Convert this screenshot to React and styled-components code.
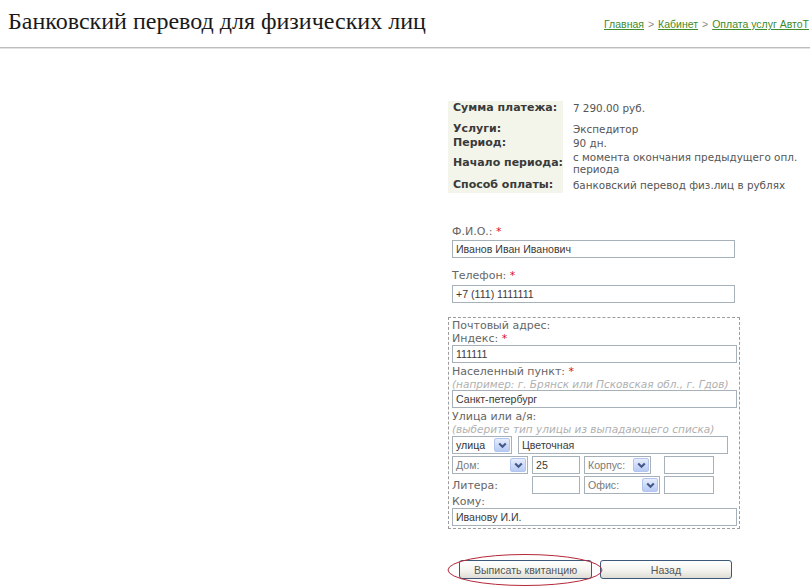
import React from 'react';
import styled, { createGlobalStyle } from 'styled-components';

const GlobalStyle = createGlobalStyle`
  html, body {
    margin: 0;
    padding: 0;
    background: #ffffff;
  }
  * {
    box-sizing: border-box;
  }
`;

const Page = styled.div`
  width: 810px;
  height: 588px;
  overflow: hidden;
  font-family: 'DejaVu Sans', Verdana, sans-serif;
  font-size: 11px;
  color: #555;
`;

const Header = styled.div`
  display: grid;
  grid-template-columns: 596px auto;
  align-items: start;
  height: 47px;
  padding: 6px 0 0 8px;
  white-space: nowrap;
  overflow: hidden;
`;

const Title = styled.h1`
  margin: 0;
  font-family: 'Liberation Serif', 'Times New Roman', serif;
  font-weight: normal;
  font-size: 24px;
  line-height: 30px;
  color: #1a1a1a;
`;

const Crumbs = styled.div`
  padding-top: 12px;
  font-family: 'Liberation Sans', Arial, sans-serif;
  font-size: 10.5px;
  line-height: 12px;
  color: #8a8a8a;
  display: flex;
  gap: 4px;
`;

const Crumb = styled.a`
  color: #3f8a2a;
  text-decoration: underline;
`;

const Rule = styled.div`
  height: 2px;
  border-top: 1px solid #bdbdbd;
  border-bottom: 1px solid #e2e2e2;
`;

const Content = styled.div`
  padding: 52px 0 0 452px;
`;

const Summary = styled.table`
  margin-left: -4px;
  border-collapse: collapse;
  line-height: 12px;
`;

const Label = styled.td`
  background: #f3f5ea;
  font-weight: bold;
  color: #3a3a3a;
  width: 114px;
  padding: ${(p) => p.$pad || '1px 0'};
  padding-left: 5px;
  vertical-align: middle;
  white-space: nowrap;
`;

const Value = styled.td`
  color: #555;
  font-size: 10.4px;
  padding: ${(p) => p.$pad || '1px 0'};
  padding-left: 10px;
  vertical-align: middle;
  white-space: nowrap;
`;

const Form = styled.div`
  width: 288px;
  margin-top: 32px;
  display: flex;
  flex-direction: column;
`;

const Field = styled.div`
  display: flex;
  flex-direction: column;
  margin-bottom: ${(p) => p.$gap || 0}px;
`;

const FieldLabel = styled.div`
  color: #666;
  line-height: 13px;
  margin-top: ${(p) => p.$top || 0}px;
  margin-bottom: ${(p) => p.$gap || 0}px;
  white-space: nowrap;
`;

const Req = styled.span`
  color: #d0102a;
`;

const Hint = styled.div`
  color: #b0b0b0;
  font-style: italic;
  font-size: 10.5px;
  line-height: 12px;
  white-space: nowrap;
`;

const TextInput = styled.input`
  width: ${(p) => p.$w}px;
  height: 18px;
  margin: 0;
  padding: 0 3px;
  border: 1px solid #a7b1b9;
  font-family: 'Liberation Sans', Arial, sans-serif;
  font-size: 10.6px;
  color: #3a3a3a;
  background: #fff;
  outline: none;
`;

const Address = styled.div`
  margin-left: -4px;
  width: 292px;
  border: 1px dashed #9c9c9c;
  padding: 1px 2px 2px 3px;
  display: flex;
  flex-direction: column;
`;

const Row = styled.div`
  display: flex;
  gap: 6px;
  margin-top: 1px;
`;

const Grid = styled.div`
  display: grid;
  grid-template-columns: 76px 48px 76px 50px;
  column-gap: 4px;
  row-gap: 2px;
  margin-top: 2px;
  align-items: center;
`;

const Select = styled.div`
  width: ${(p) => p.$w}px;
  height: 18px;
  border: 1px solid #a7b1b9;
  display: flex;
  align-items: center;
  justify-content: space-between;
  padding: 0 1px 0 3px;
  font-family: 'Liberation Sans', Arial, sans-serif;
  font-size: 10.6px;
  color: ${(p) => (p.$muted ? '#7a7a7a' : '#333')};
  background: #fff;
`;

const Arrow = styled.span`
  width: 16px;
  height: 14px;
  border: 1px solid #b3c5ee;
  border-radius: 2px;
  background: linear-gradient(#e6edfd, #b8cbf5);
  display: flex;
  align-items: center;
  justify-content: center;
`;

const Buttons = styled.div`
  position: relative;
  display: flex;
  gap: 8px;
  margin-top: 31px;
  padding-left: 7px;
`;

const Button = styled.button`
  width: ${(p) => p.$w}px;
  height: 19px;
  margin: 0;
  padding: 0;
  border: 1px solid #3d5879;
  border-radius: 3px;
  background: linear-gradient(#ffffff, #f4f3ee 55%, #dedcd4);
  font-family: 'Liberation Sans', Arial, sans-serif;
  font-size: 10.6px;
  color: #555;
`;

const Circle = styled.svg`
  position: absolute;
  left: -6px;
  top: -7px;
  pointer-events: none;
`;

function DropDown({ w, muted, children }) {
  return (
    <Select $w={w} $muted={muted}>
      <span>{children}</span>
      <Arrow>
        <svg width="9" height="7" viewBox="0 0 9 7">
          <path d="M1.2 1.5 L4.5 4.8 L7.8 1.5" fill="none" stroke="#44598a" strokeWidth="2.1" />
        </svg>
      </Arrow>
    </Select>
  );
}

export default function App() {
  return (
    <Page>
      <GlobalStyle />
      <Header>
        <Title>Банковский перевод для физических лиц</Title>
        <Crumbs>
          <Crumb>Главная</Crumb>
          <span>&gt;</span>
          <Crumb>Кабинет</Crumb>
          <span>&gt;</span>
          <Crumb>Оплата услуг АвтоТ</Crumb>
        </Crumbs>
      </Header>
      <Rule />
      <Content>
        <Summary>
          <tbody>
            <tr>
              <Label $pad="1px 0 8px">Сумма платежа:</Label>
              <Value $pad="1px 0 8px">7 290.00 руб.</Value>
            </tr>
            <tr>
              <Label>Услуги:</Label>
              <Value>Экспедитор</Value>
            </tr>
            <tr>
              <Label>Период:</Label>
              <Value>90 дн.</Value>
            </tr>
            <tr>
              <Label>Начало периода:</Label>
              <Value>
                с момента окончания предыдущего опл.
                <br />
                периода
              </Value>
            </tr>
            <tr>
              <Label $pad="3px 0 2px">Способ оплаты:</Label>
              <Value $pad="3px 0 2px">банковский перевод физ.лиц в рублях</Value>
            </tr>
          </tbody>
        </Summary>

        <Form>
          <Field $gap={11}>
            <FieldLabel $gap={2}>
              Ф.И.О.: <Req>*</Req>
            </FieldLabel>
            <TextInput $w={283} defaultValue="Иванов Иван Иванович" />
          </Field>
          <Field $gap={14}>
            <FieldLabel $gap={3}>
              Телефон: <Req>*</Req>
            </FieldLabel>
            <TextInput $w={283} defaultValue="+7 (111) 1111111" />
          </Field>

          <Address>
            <FieldLabel>Почтовый адрес:</FieldLabel>
            <FieldLabel>
              Индекс: <Req>*</Req>
            </FieldLabel>
            <TextInput $w={285} defaultValue="111111" />
            <FieldLabel $top={2}>
              Населенный пункт: <Req>*</Req>
            </FieldLabel>
            <Hint>(например: г. Брянск или Псковская обл., г. Гдов)</Hint>
            <TextInput $w={285} defaultValue="Санкт-петербург" />
            <FieldLabel $top={2}>Улица или а/я:</FieldLabel>
            <Hint>(выберите тип улицы из выпадающего списка)</Hint>
            <Row>
              <DropDown w={60}>улица</DropDown>
              <TextInput $w={210} defaultValue="Цветочная" />
            </Row>
            <Grid>
              <DropDown w={76} muted>
                Дом:
              </DropDown>
              <TextInput $w={48} defaultValue="25" />
              <DropDown w={67} muted>
                Корпус:
              </DropDown>
              <TextInput $w={50} />
              <FieldLabel>Литера:</FieldLabel>
              <TextInput $w={48} />
              <DropDown w={76} muted>
                Офис:
              </DropDown>
              <TextInput $w={50} />
            </Grid>
            <FieldLabel $top={1}>Кому:</FieldLabel>
            <TextInput $w={285} defaultValue="Иванову И.И." />
          </Address>

          <Buttons>
            <Button $w={133}>Выписать квитанцию</Button>
            <Button $w={132}>Назад</Button>
            <Circle width="160" height="34" viewBox="0 0 160 34">
              <ellipse cx="79" cy="17" rx="77" ry="15.5" fill="none" stroke="#b5283a" strokeWidth="1" />
            </Circle>
          </Buttons>
        </Form>
      </Content>
    </Page>
  );
}
